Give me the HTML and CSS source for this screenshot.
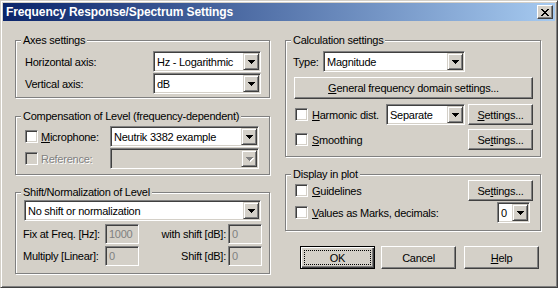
FILE: index.html
```html
<!DOCTYPE html>
<html>
<head>
<meta charset="utf-8">
<title>Frequency Response/Spectrum Settings</title>
<link rel="stylesheet" href="styles.css">
</head>
<body>
<div class="window">
  <div class="titlebar">
    <span class="title">Frequency Response/Spectrum Settings</span>
    <span class="close"><svg class="xicon" width="8" height="7" viewBox="0 0 8 7" shape-rendering="crispEdges"><path d="M0 0h2v1H0zM6 0h2v1H6zM1 1h2v1H1zM5 1h2v1H5zM2 2h4v1H2zM3 3h2v1H3zM2 4h4v1H2zM1 5h2v1H1zM5 5h2v1H5zM0 6h2v1H0zM6 6h2v1H6z" fill="#000"/></svg></span>
  </div>
  <div class="content">
    <div class="col">
      <div class="group axes">
        <span class="legend">Axes settings</span>
        <div class="row spread">
          <span>Horizontal axis:</span>
          <div class="combo w-axis"><span class="val">Hz - Logarithmic</span><span class="ddb"><svg width="7" height="4" viewBox="0 0 7 4" shape-rendering="crispEdges"><path d="M0 0h7v1H0zM1 1h5v1H1zM2 2h3v1H2zM3 3h1v1H3z" fill="#000"/></svg></span></div>
        </div>
        <div class="row spread gap1">
          <span>Vertical axis:</span>
          <div class="combo w-axis"><span class="val">dB</span><span class="ddb"><svg width="7" height="4" viewBox="0 0 7 4" shape-rendering="crispEdges"><path d="M0 0h7v1H0zM1 1h5v1H1zM2 2h3v1H2zM3 3h1v1H3z" fill="#000"/></svg></span></div>
        </div>
      </div>

      <div class="group comp">
        <span class="legend">Compensation of Level (frequency-dependent)</span>
        <div class="row">
          <span class="cb"></span>
          <span class="cblabel grow"><u>M</u>icrophone:</span>
          <div class="combo w-comp"><span class="val">Neutrik 3382 example</span><span class="ddb"><svg width="7" height="4" viewBox="0 0 7 4" shape-rendering="crispEdges"><path d="M0 0h7v1H0zM1 1h5v1H1zM2 2h3v1H2zM3 3h1v1H3z" fill="#000"/></svg></span></div>
        </div>
        <div class="row gap1">
          <span class="cb off"></span>
          <span class="cblabel grow dis">Reference:</span>
          <div class="combo w-comp off"><span class="val"></span><span class="ddb"><svg class="grayarrow" width="7" height="4" viewBox="0 0 7 4" shape-rendering="crispEdges"><path d="M0 0h7v1H0zM1 1h5v1H1zM2 2h3v1H2zM3 3h1v1H3z" fill="#808080"/></svg></span></div>
        </div>
      </div>

      <div class="group shift">
        <span class="legend">Shift/Normalization of Level</span>
        <div class="combo w-shift"><span class="val">No shift or normalization</span><span class="ddb"><svg width="7" height="4" viewBox="0 0 7 4" shape-rendering="crispEdges"><path d="M0 0h7v1H0zM1 1h5v1H1zM2 2h3v1H2zM3 3h1v1H3z" fill="#000"/></svg></span></div>
        <div class="fields">
          <span>Fix at Freq. [Hz]:</span>
          <span class="tb">1000</span>
          <span class="r">with shift [dB]:</span>
          <span class="tb">0</span>
          <span>Multiply [Linear]:</span>
          <span class="tb">0</span>
          <span class="r">Shift [dB]:</span>
          <span class="tb">0</span>
        </div>
      </div>
    </div>

    <div class="col">
      <div class="group calc">
        <span class="legend">Calculation settings</span>
        <div class="row">
          <span class="typelabel">Type:</span>
          <div class="combo w-type"><span class="val">Magnitude</span><span class="ddb"><svg width="7" height="4" viewBox="0 0 7 4" shape-rendering="crispEdges"><path d="M0 0h7v1H0zM1 1h5v1H1zM2 2h3v1H2zM3 3h1v1H3z" fill="#000"/></svg></span></div>
        </div>
        <div class="btn btn-wide"><span><u>G</u>eneral frequency domain settings...</span></div>
        <div class="row harm">
          <span class="cb ml2"></span>
          <span class="cblabel grow"><u>H</u>armonic dist.</span>
          <div class="combo w-harm"><span class="val">Separate</span><span class="ddb"><svg width="7" height="4" viewBox="0 0 7 4" shape-rendering="crispEdges"><path d="M0 0h7v1H0zM1 1h5v1H1zM2 2h3v1H2zM3 3h1v1H3z" fill="#000"/></svg></span></div>
          <div class="btn btn-set ml3"><span><u>S</u>ettings...</span></div>
        </div>
        <div class="row smooth">
          <span class="cb ml2"></span>
          <span class="cblabel grow"><u>S</u>moothing</span>
          <div class="btn btn-set"><span>Se<u>t</u>tings...</span></div>
        </div>
      </div>

      <div class="group display">
        <span class="legend">Display in plot</span>
        <div class="row">
          <span class="cb ml2"></span>
          <span class="cblabel grow"><u>G</u>uidelines</span>
          <div class="btn btn-set"><span>Se<u>t</u>tings...</span></div>
        </div>
        <div class="row gap1">
          <span class="cb ml2"></span>
          <span class="cblabel grow"><u>V</u>alues as Marks, decimals:</span>
          <div class="combo w-dec"><span class="val">0</span><span class="ddb"><svg width="7" height="4" viewBox="0 0 7 4" shape-rendering="crispEdges"><path d="M0 0h7v1H0zM1 1h5v1H1zM2 2h3v1H2zM3 3h1v1H3z" fill="#000"/></svg></span></div>
        </div>
      </div>

      <div class="actions">
        <div class="btn btn-action default"><span class="focus">OK</span></div>
        <div class="btn btn-action cancel"><span>Cancel</span></div>
        <div class="btn btn-action help"><span><u>H</u>elp</span></div>
      </div>
    </div>
  </div>
</div>
</body>
</html>
```

FILE: styles.css
```css
* { box-sizing: border-box; }

body {
  margin: 0;
  font-family: "Liberation Sans", Arial, sans-serif;
  font-size: 11px;
  letter-spacing: -0.25px;
  color: #000;
  background: #D4D0C8;
}

u { text-decoration: underline; text-underline-offset: 1px; }

.window {
  width: 558px;
  height: 288px;
  background: #D4D0C8;
  border: 1px solid;
  border-color: #D4D0C8 #404040 #404040 #D4D0C8;
  box-shadow: inset 1px 1px #fff, inset -1px -1px #808080;
  padding: 2px;
}

.titlebar {
  height: 18px;
  display: flex;
  align-items: center;
  justify-content: space-between;
  padding: 0 2px 0 3px;
  background: linear-gradient(90deg, #0A246A, #A6CAF0);
}

.title {
  color: #fff;
  font-weight: bold;
  font-size: 12px;
  letter-spacing: -0.1px;
  white-space: nowrap;
}

.close {
  width: 16px;
  height: 14px;
  background: #D4D0C8;
  border: 1px solid;
  border-color: #fff #404040 #404040 #fff;
  box-shadow: inset -1px -1px #808080;
  display: flex;
  align-items: center;
  justify-content: center;
}

.xicon { display: block; margin: 1px 1px 0 0; }

.content {
  display: grid;
  grid-template-columns: 255px 256px;
  column-gap: 15px;
  padding: 19px 0 0 12px;
  align-items: start;
}

.col { display: flex; flex-direction: column; }

.group {
  position: relative;
  border: 1px solid #808080;
  box-shadow: inset 1px 1px #fff, 1px 1px #fff;
}

.legend {
  position: absolute;
  top: -7px;
  left: 5px;
  padding: 0 2px;
  line-height: 13px;
  background: #D4D0C8;
  white-space: nowrap;
}

.axes { padding: 10px 8px 3px 9px; }
.comp { margin-top: 18px; padding: 9px 10px 5px 9px; }
.shift { margin-top: 17px; padding: 7px 7px 7px 7px; }
.calc { padding: 10px 7px 6px 7px; }
.display { margin-top: 17px; padding: 5px 7px 7px 7px; }

.row {
  display: flex;
  align-items: center;
  height: 21px;
  white-space: nowrap;
}
.spread { justify-content: space-between; }
.gap1 { margin-top: 1px; }
.grow { flex: 1; }
.ml2 { margin-left: 2px; }
.ml3 { margin-left: 3px; }

.cb {
  width: 13px;
  height: 13px;
  flex: none;
  background: #fff;
  border: 1px solid;
  border-color: #808080 #fff #fff #808080;
  box-shadow: inset 1px 1px #404040, inset -1px -1px #D4D0C8;
}
.cb.off { background: #D4D0C8; }

.cblabel { margin-left: 3px; }
.calc .cblabel, .display .cblabel { margin-left: 4px; }

.dis { color: #808080; text-shadow: 1px 1px #fff; }

.combo {
  height: 21px;
  flex: none;
  display: flex;
  align-items: stretch;
  padding: 1px;
  background: #fff;
  border: 1px solid;
  border-color: #808080 #fff #fff #808080;
  box-shadow: inset 1px 1px #404040, inset -1px -1px #D4D0C8;
}
.combo.off { background: #D4D0C8; }

.combo .val {
  flex: 1;
  display: flex;
  align-items: center;
  padding-left: 2px;
  white-space: nowrap;
  overflow: hidden;
}

.ddb {
  width: 16px;
  flex: none;
  background: #D4D0C8;
  border: 1px solid;
  border-color: #D4D0C8 #404040 #404040 #D4D0C8;
  box-shadow: inset 1px 1px #fff, inset -1px -1px #808080;
  display: flex;
  align-items: center;
  justify-content: center;
}
.ddb svg { display: block; }
.grayarrow { filter: drop-shadow(1px 1px 0 #fff); }

.w-axis { width: 108px; }
.w-comp { width: 149px; }
.w-shift { width: 237px; margin-left: 1px; }
.w-type { width: 142px; }
.w-harm { width: 79px; }
.w-dec { width: 33px; margin-right: 3px; }

.typelabel { width: 30px; }

.fields {
  display: grid;
  grid-template-columns: 82px 34px 1fr 34px;
  grid-auto-rows: 20px;
  row-gap: 2px;
  margin-top: 3px;
  align-items: center;
  white-space: nowrap;
}
.fields .r { text-align: right; padding-right: 2px; }

.tb {
  height: 20px;
  display: flex;
  align-items: center;
  padding-left: 3px;
  color: #808080;
  background: #D4D0C8;
  border: 1px solid;
  border-color: #808080 #fff #fff #808080;
  box-shadow: inset 1px 1px #404040, inset -1px -1px #D4D0C8;
}

.btn {
  height: 21px;
  flex: none;
  display: flex;
  align-items: center;
  justify-content: center;
  background: #D4D0C8;
  border: 1px solid;
  border-color: #fff #404040 #404040 #fff;
  box-shadow: inset -1px -1px #808080;
  white-space: nowrap;
}

.btn-wide { width: 239px; height: 22px; margin: 5px 0 0 1px; }
.btn-set { width: 65px; }

.harm { margin-top: 5px; }
.smooth { margin-top: 4px; }

.actions {
  display: flex;
  margin-top: 15px;
  padding-left: 15px;
}

.btn-action { width: 75px; height: 23px; }
.cancel { margin-left: 6px; }
.help { margin-left: 8px; }

.btn.default {
  border: 1px solid #000;
  box-shadow: inset 1px 1px #fff, inset -1px -1px #404040, inset -2px -2px #808080;
  padding: 3px;
  align-items: stretch;
}

.focus {
  flex: 1;
  display: flex;
  align-items: center;
  justify-content: center;
  border: 1px dotted #000;
}
```
